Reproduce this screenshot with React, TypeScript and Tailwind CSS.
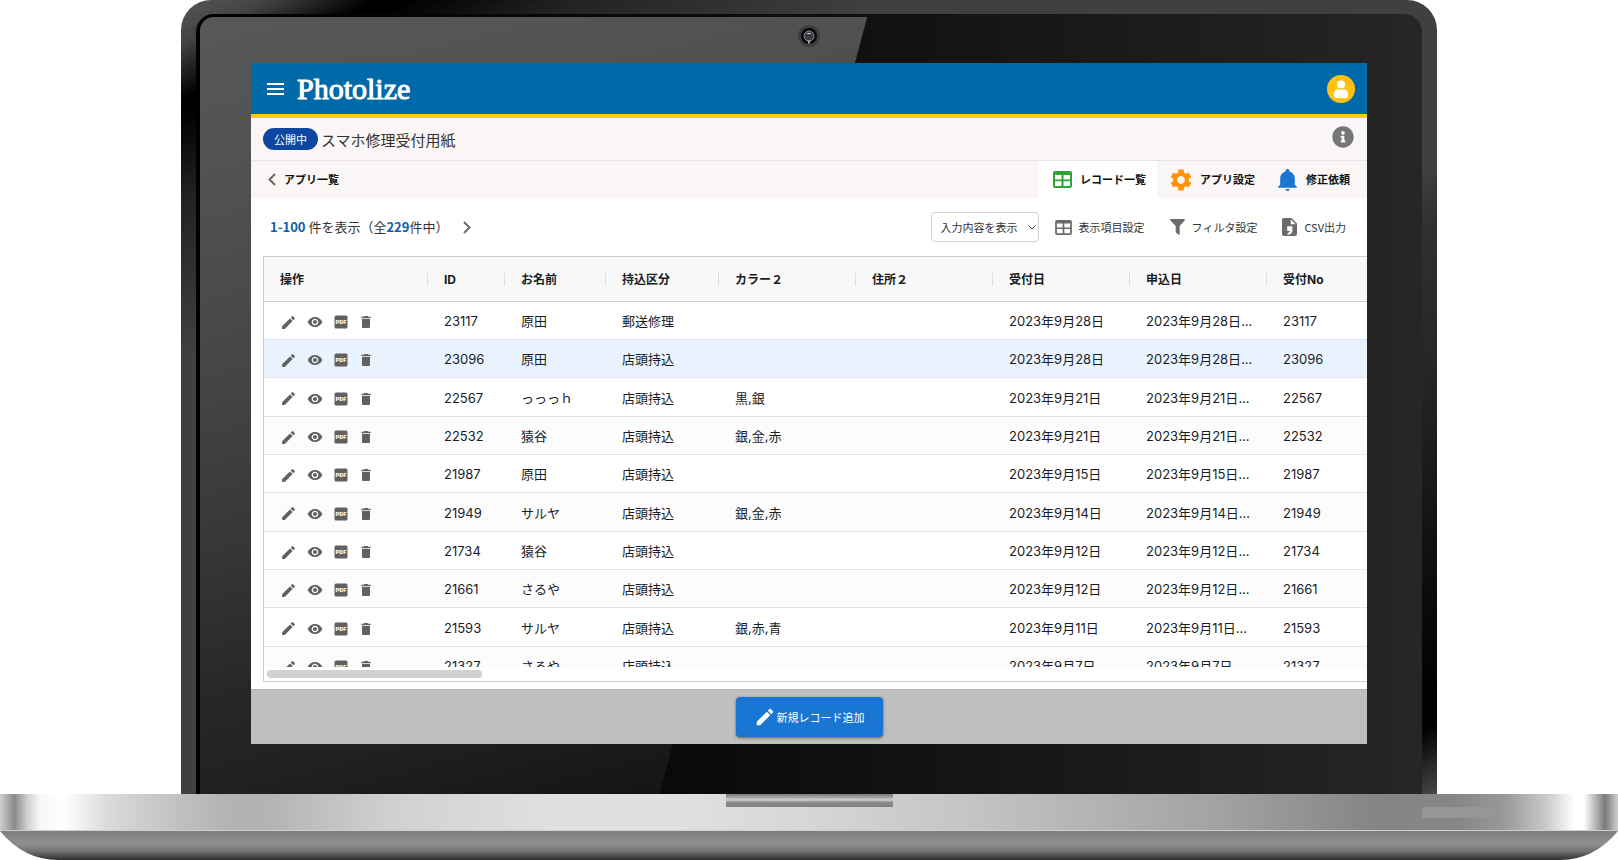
import type { ReactNode } from "react"
import { FaInfoCircle } from "react-icons/fa"
import { MdDelete, MdEdit, MdSettings, MdVisibility } from "react-icons/md"

interface RecordRow {
  id: string
  name: string
  kind: string
  color: string
  date: string
}

const records: RecordRow[] = [
  { id: "23117", name: "原田", kind: "郵送修理", color: "", date: "2023年9月28日" },
  { id: "23096", name: "原田", kind: "店頭持込", color: "", date: "2023年9月28日" },
  { id: "22567", name: "っっっｈ", kind: "店頭持込", color: "黒,銀", date: "2023年9月21日" },
  { id: "22532", name: "猿谷", kind: "店頭持込", color: "銀,金,赤", date: "2023年9月21日" },
  { id: "21987", name: "原田", kind: "店頭持込", color: "", date: "2023年9月15日" },
  { id: "21949", name: "サルヤ", kind: "店頭持込", color: "銀,金,赤", date: "2023年9月14日" },
  { id: "21734", name: "猿谷", kind: "店頭持込", color: "", date: "2023年9月12日" },
  { id: "21661", name: "さるや", kind: "店頭持込", color: "", date: "2023年9月12日" },
  { id: "21593", name: "サルヤ", kind: "店頭持込", color: "銀,赤,青", date: "2023年9月11日" },
  { id: "21327", name: "さるや", kind: "店頭持込", color: "", date: "2023年9月7日" }
]

const columns = [
  { label: "操作", width: "w-[164px]" },
  { label: "ID", width: "w-[77px]" },
  { label: "お名前", width: "w-[101px]" },
  { label: "持込区分", width: "w-[113px]" },
  { label: "カラー２", width: "w-[137px]" },
  { label: "住所２", width: "w-[137px]" },
  { label: "受付日", width: "w-[137px]" },
  { label: "申込日", width: "w-[137px]" },
  { label: "受付No", width: "" }
]

const HOVERED_ID = "23096"

function TableIcon({ className }: { className: string }) {
  return (
    <svg viewBox="0 0 19 17" className={className} aria-hidden="true">
      <path
        fill="currentColor"
        fillRule="evenodd"
        d="M2 0h15a2 2 0 0 1 2 2v13a2 2 0 0 1-2 2H2a2 2 0 0 1-2-2V2a2 2 0 0 1 2-2Zm0 4v4.500h6.500V4Zm8.500 0v4.500H17V4ZM2 10.300V15h6.500v-4.700Zm8.500 0V15H17v-4.700Z"
      />
    </svg>
  )
}

function BellIcon() {
  return (
    <svg viewBox="0 0 24 24" className="size-[25px] text-[#1976d2]" aria-hidden="true">
      <path
        fill="currentColor"
        d="M21 19v1H3v-1l2-2v-6c0-3.100 2.030-5.830 5-6.710V4a2 2 0 0 1 4 0v.290c2.970.880 5 3.610 5 6.710v6l2 2m-7 2a2 2 0 0 1-4 0"
      />
    </svg>
  )
}

function FilterIcon() {
  return (
    <svg viewBox="0 0 15 16" className="h-4 w-[15px]" aria-hidden="true">
      <path fill="currentColor" d="M.5 0h14c.5 0 .6.5.4.900L9.700 7v8.400c0 .500-.400.700-.800.400l-3.200-2.300V7L.100.900C-.100.500 0 0 .5 0Z" />
    </svg>
  )
}

function CsvIcon() {
  return (
    <svg viewBox="0 0 15 18" className="h-[18px] w-[15px]" aria-hidden="true">
      <path fill="currentColor" d="M2 0h7.500L15 5.500V16a2 2 0 0 1-2 2H2a2 2 0 0 1-2-2V2a2 2 0 0 1 2-2Z" />
      <path fill="#fff" d="M8.800 1.300v4.900h4.900Z" />
      <path fill="#fff" d="M5.200 8.300h5.200v4.200c0 2.400-1.600 4-4.800 4.200v-1.700c1.500-.200 2.300-.900 2.400-2H5.200Z" />
    </svg>
  )
}

function PdfIcon() {
  return (
    <svg viewBox="0 0 16 16" className="size-4" aria-hidden="true">
      <rect x="1.500" y="1.500" width="13" height="13" rx="1.500" fill="currentColor" />
      <text
        x="8"
        y="10"
        fill="#fff"
        fontSize="6"
        fontWeight="900"
        textAnchor="middle"
        className="font-['Roboto',sans-serif]">
        PDF
      </text>
    </svg>
  )
}

function Chevron({ direction }: { direction: "left" | "right" }) {
  return (
    <svg viewBox="0 0 8 13" className="h-[13px] w-2" fill="none" stroke="#666" strokeWidth="1.900" aria-hidden="true">
      <path d={direction === "left" ? "M7 1 1.500 6.500 7 12" : "M1 1l5.500 5.500L1 12"} />
    </svg>
  )
}

function AvatarIcon() {
  return (
    <svg viewBox="0 0 28 28" className="size-7" aria-hidden="true">
      <circle cx="14" cy="14" r="14" fill="#ffc012" />
      <circle cx="14" cy="9.500" r="4" fill="#fff" />
      <path fill="#fff" d="M6.800 20c0-3.600 1.800-5.800 4.200-5.800 1 .6 2 .8 3 .8s2-.2 3-.8c2.400 0 4.200 2.200 4.200 5.800 0 2-1 3-2.600 3H9.400c-1.600 0-2.600-1-2.600-3Z" />
    </svg>
  )
}

function Camera() {
  return (
    <svg viewBox="0 0 22 22" className="absolute left-1/2 top-[11px] size-[22px] -translate-x-1/2" aria-hidden="true">
      <circle cx="11" cy="11" r="11" fill="#3d3d3d" />
      <circle cx="11" cy="11" r="8" fill="#050505" />
      <circle cx="11" cy="11" r="5" fill="#3a3d42" stroke="#8a8a8a" strokeWidth="1" />
      <path d="M8.500 9c1-1.500 4-1.500 5 0Z" fill="#cfd6de" />
      <path d="M9 15.500h4l-1 1v2h-2v-2Z" fill="#a8a8a8" />
    </svg>
  )
}

function Tab({ active, icon, children }: { active?: boolean; icon: ReactNode; children: ReactNode }) {
  return (
    <a
      href="#"
      aria-current={active ? "page" : undefined}
      className={`flex items-center text-[11px] font-bold text-[#111] ${
        active ? "gap-2 bg-white pl-[14px] pr-[11px]" : "gap-[6px] pl-[11px]"
      }`}>
      {icon}
      {children}
    </a>
  )
}

function ToolButton({ icon, children }: { icon: ReactNode; children: ReactNode }) {
  return (
    <button type="button" className="flex items-center gap-[7px] text-[11px] text-[#333]">
      <span className="text-[#6b6b6b]">{icon}</span>
      {children}
    </button>
  )
}

function AppHeader() {
  return (
    <header className="flex h-[55px] items-center border-b-4 border-[#ffc90e] bg-[#0069a8] pl-4 pr-3">
      <button type="button" aria-label="メニュー" className="text-white">
        <svg viewBox="0 0 17 12" className="h-3 w-[17px]" aria-hidden="true">
          <path fill="currentColor" d="M0 0h17v2H0zM0 5h17v2H0zM0 10h17v2H0z" />
        </svg>
      </button>
      <a
        href="#"
        className="ml-[13px] font-['Liberation_Serif',serif] text-[30px] leading-none text-white [-webkit-text-stroke:1px_#fff]">
        Photolize
      </a>
      <button type="button" aria-label="アカウント" className="ml-auto">
        <AvatarIcon />
      </button>
    </header>
  )
}

function TitleBar() {
  return (
    <div className="flex h-[43px] items-center border-b border-[#e6e4e4] bg-[#f9f6f5] pl-3 pr-[13px]">
      <span className="rounded-full bg-[#0d47a1] px-[11px] text-[11px] leading-[22px] text-white">公開中</span>
      <h1 className="ml-[3px] text-[15px] leading-none text-[#333]">スマホ修理受付用紙</h1>
      <button type="button" aria-label="情報" className="mb-1 ml-auto text-[#757575]">
        <FaInfoCircle size={22} />
      </button>
    </div>
  )
}

function NavBar() {
  return (
    <nav className="flex h-[37px] items-stretch bg-[#f9f6f5] pl-[17px] pr-[17px]">
      <a href="#" className="mr-auto flex items-center gap-2 text-[11px] font-bold text-[#111]">
        <Chevron direction="left" />
        アプリ一覧
      </a>
      <Tab active icon={<TableIcon className="h-[17px] w-[19px] text-[#2fa336]" />}>
        レコード一覧
      </Tab>
      <Tab icon={<MdSettings size={26} className="text-[#ff9409]" />}>アプリ設定</Tab>
      <span className="w-[9px]" />
      <Tab icon={<BellIcon />}>修正依頼</Tab>
    </nav>
  )
}

function Toolbar() {
  return (
    <div className="flex h-[58px] items-center pl-[19px] pr-[21px]">
      <p className="text-[13px] text-[#333]">
        <b className="text-[#0d5fa8]">1-100</b> 件を表示（全<b className="text-[#0d5fa8]">229</b>件中）
      </p>
      <button type="button" aria-label="次のページ" className="ml-[15px]">
        <Chevron direction="right" />
      </button>
      <div className="relative ml-auto mr-4">
        <select
          aria-label="表示内容"
          className="h-[30px] w-[108px] appearance-none rounded border border-[#d2d2d2] bg-white pl-[9px] text-[11px] text-[#333]">
          <option>入力内容を表示</option>
        </select>
        <svg
          viewBox="0 0 8 5"
          className="pointer-events-none absolute right-[3px] top-[13px] h-[5px] w-2"
          fill="none"
          stroke="#444"
          aria-hidden="true">
          <path d="m.5.5 3.500 3.500L7.500.5" />
        </svg>
      </div>
      <div className="flex items-center gap-[25px]">
        <ToolButton icon={<TableIcon className="h-[15px] w-[17px]" />}>表示項目設定</ToolButton>
        <ToolButton icon={<FilterIcon />}>フィルタ設定</ToolButton>
        <ToolButton icon={<CsvIcon />}>CSV出力</ToolButton>
      </div>
    </div>
  )
}

function RowActions() {
  return (
    <div className="flex gap-[10px] pt-px text-[#616161]">
      <button type="button" aria-label="編集">
        <MdEdit size={17} />
      </button>
      <button type="button" aria-label="表示">
        <MdVisibility size={16} />
      </button>
      <button type="button" aria-label="PDF">
        <PdfIcon />
      </button>
      <button type="button" aria-label="削除" className="-ml-px">
        <MdDelete size={16} />
      </button>
    </div>
  )
}

function RecordTable() {
  return (
    <div className="ml-3 border-y border-l border-[#c9cdd6]">
      <div className="h-[410px] overflow-hidden">
        <table className="w-full table-fixed border-separate border-spacing-0 font-['Inter','Noto_Sans_CJK_JP',sans-serif]">
          <thead>
            <tr className="h-[45px] bg-[#f8f8f8]">
              {columns.map((col, i) => (
                <th
                  key={col.label}
                  scope="col"
                  className={`border-b border-[#cdd1d6] p-0 pt-px text-left text-[12px] font-bold text-[#181d1f] ${col.width}`}>
                  <div
                    className={`flex h-[13px] items-center whitespace-nowrap pl-4 ${
                      i < columns.length - 1 ? "border-r border-[#dcdcdc]" : ""
                    }`}>
                    {col.label}
                  </div>
                </th>
              ))}
            </tr>
          </thead>
          <tbody>
            {records.map((r) => (
              <tr
                key={r.id}
                className={`h-[38px] text-[13px] leading-none text-[#181d1f] nth-[3n]:h-[39px] [&>td]:whitespace-nowrap [&>td]:border-b [&>td]:border-[#e2e5ee] [&>td]:p-0 [&>td]:pl-4 [&>td]:pt-[2px] ${
                  r.id === HOVERED_ID ? "bg-[#e9f3fe]" : "even:bg-[#fcfcfc]"
                }`}>
                <td>
                  <RowActions />
                </td>
                <td>{r.id}</td>
                <td>{r.name}</td>
                <td>{r.kind}</td>
                <td>{r.color}</td>
                <td></td>
                <td>{r.date}</td>
                <td>{r.date}...</td>
                <td>{r.id}</td>
              </tr>
            ))}
          </tbody>
        </table>
      </div>
      <div className="h-[14px] pl-[3px] pt-[3px]">
        <div className="h-2 w-[215px] rounded-full bg-[#d1d1d1]" />
      </div>
    </div>
  )
}

function Screen() {
  return (
    <main className="relative overflow-hidden bg-white">
      <AppHeader />
      <TitleBar />
      <NavBar />
      <Toolbar />
      <RecordTable />
      <footer className="mt-[7px] flex h-[55px] items-center justify-center border-t border-[#b3b3b3] bg-[#bfbfbf]">
        <button
          type="button"
          className="flex h-10 items-center gap-px rounded bg-[#1976d2] px-[18px] text-[11px] text-white shadow-[0_1px_3px_rgba(0,0,0,0.5)]">
          <MdEdit size={22} />
          新規レコード追加
        </button>
      </footer>
    </main>
  )
}

function LaptopBase() {
  return (
    <div>
      <div className="relative flex h-[37px] justify-center border-b border-[#cfcfcf] bg-[linear-gradient(90deg,#d0d0d0_0%,#8a8a8a_0.9%,#d0d0d0_1.7%,#f8f8f8_2.5%,#fff_3.900%,#dcdcdc_6.500%,#c0c0c0_11%,#b3b3b3_14.200%,#b3b3b3_16.500%,#d0d0d0_24%,#e0e0e0_34%,#e0e0e0_42%,#d6d6d6_50%,#c6c6c6_59%,#a3a3a3_75%,#858585_85%,#868686_90%,#999_93%,#c8c8c8_95.500%,#fff_97.300%,#fff_97.900%,#7a7a7a_99.200%,#d0d0d0_100%)]">
        <div className="h-[13px] w-[167px] bg-[linear-gradient(180deg,#7c7c7c_0%,#999_20%,#cfcfcf_45%,#8a8a8a_65%,#808080_100%)]" />
        <div className="absolute right-[126px] top-[13px] h-[11px] w-[70px] bg-[#969694]" />
      </div>
      <svg viewBox="0 0 1618 29" preserveAspectRatio="none" className="block h-[29px] w-full" aria-hidden="true">
        <defs>
          <linearGradient id="foot" x1="0" y1="0" x2="0" y2="1">
            <stop offset="0" stopColor="#7e7e7e" />
            <stop offset="0.450" stopColor="#8f8f8f" />
            <stop offset="0.700" stopColor="#707070" />
            <stop offset="1" stopColor="#2f2f2f" />
          </linearGradient>
        </defs>
        <path d="M0 0H1618Q1594 29 1560 29H58Q24 29 0 0Z" fill="url(#foot)" />
      </svg>
    </div>
  )
}

export default function App() {
  return (
    <div className="bg-white font-['Noto_Sans_CJK_JP',sans-serif]">
      <div className="mx-[181px] rounded-t-[30px] bg-[linear-gradient(153deg,#565656_0%,#444_3%,#000_7%,#000_8%,#222_14%,#404040_25%,#404040_56%,#303030_60%,#262626_70%,#000_93%,#000_95%,#484848_100%)] px-[15px] pt-[14px]">
        <div className="relative rounded-t-[18px] bg-[linear-gradient(90deg,#000_0%,#0a0a0a_40%,#161616_66%,#262626_100%)] px-[55px] pb-[50px] pt-[49px]">
          {/* light reflection over the left half of the glass */}
          <div className="absolute bottom-0 left-1 right-0 top-[3px] rounded-tl-[14px] bg-[linear-gradient(165deg,#585858_0%,#515151_16%,#464646_32%,#363636_49%,#272727_62%,#212121_70%,#151515_81%)] [clip-path:polygon(0_0,54.600%_0,37.600%_100%,0_100%)]" />
          <Camera />
          <Screen />
        </div>
      </div>
      <LaptopBase />
    </div>
  )
}
